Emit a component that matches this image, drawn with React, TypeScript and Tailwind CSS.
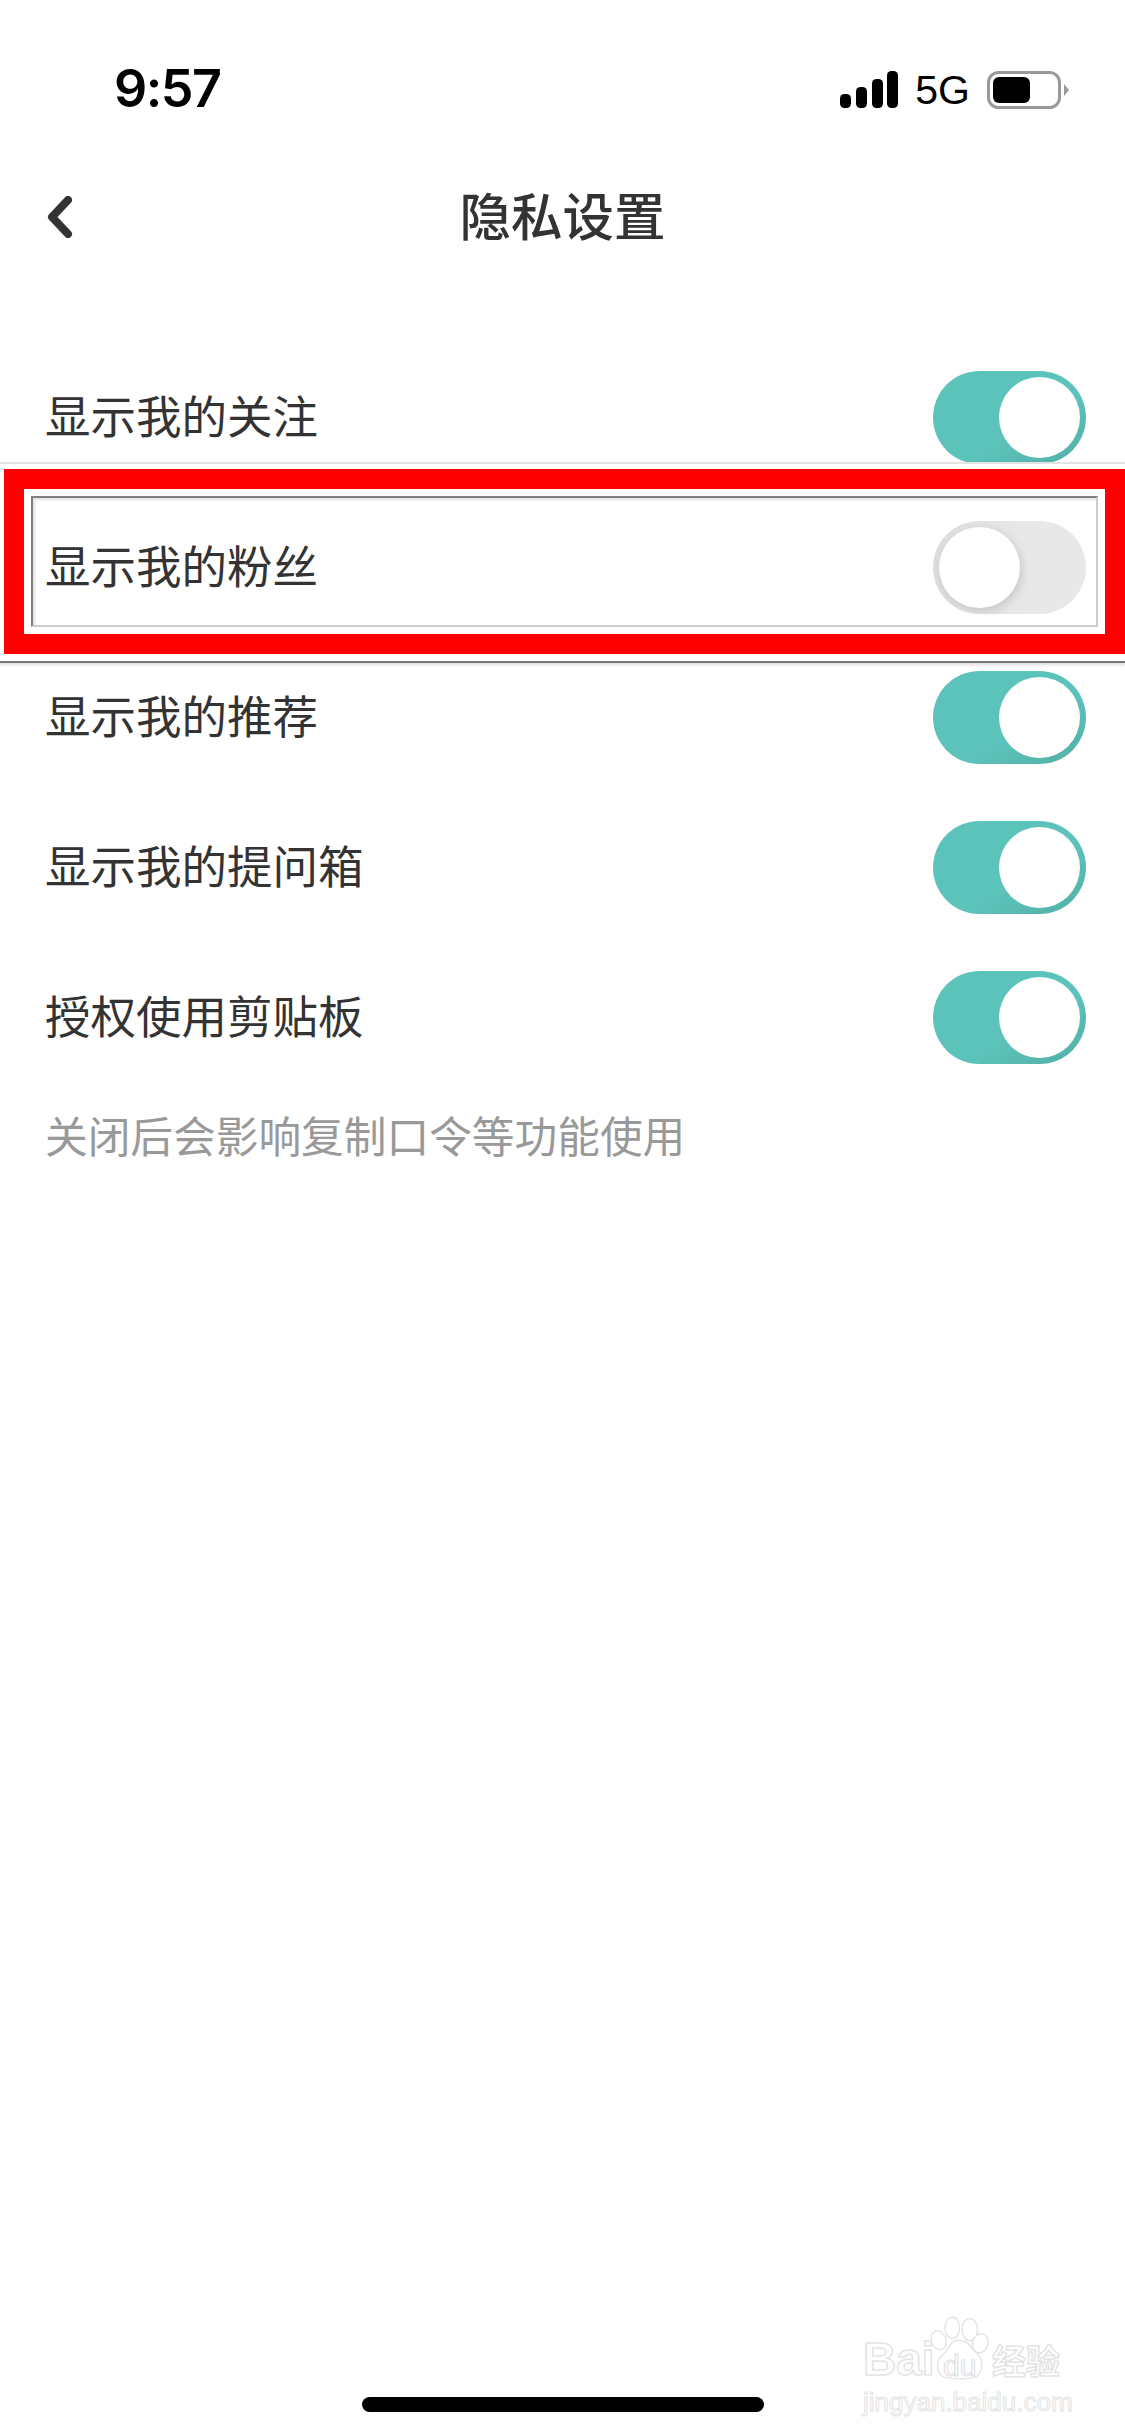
const cjk = "font-['Noto_Sans_CJK_SC','Noto_Sans',sans-serif]"
const outlined = "text-white [-webkit-text-stroke:1.5px_#e4e4e4]"

function Toggle({ on }: { on: boolean }) {
  return (
    <div
      className={`h-[93px] w-[153px] rounded-full p-[6px] flex ${
        on
          ? "justify-end bg-gradient-to-br from-[#5cc3ba] from-60% to-[#52aea6]"
          : "justify-start bg-gradient-to-r from-[#dcdcdc] to-[#e8e8e9] to-60%"
      }`}
    >
      <div className={`h-[81px] w-[81px] rounded-full bg-white ${on ? "" : "shadow-[3px_3px_8px_rgba(0,0,0,0.12)]"}`} />
    </div>
  )
}

function Row({ label, on }: { label: string; on: boolean }) {
  return (
    <div className="flex h-[150px] items-center justify-between pl-[45px] pr-[39px]">
      <span className="mb-[6px] text-[45.5px] leading-[60px] text-[#333333]">{label}</span>
      <Toggle on={on} />
    </div>
  )
}

export default function App() {
  return (
    <div className={`relative h-[2436px] w-[1125px] overflow-hidden bg-white ${cjk}`}>
      {/* status bar */}
      <div className="flex h-[112px] items-end justify-between pl-[114px] pr-[55px] text-black">
        <span className="mb-[-2px] font-['Inter',sans-serif] text-[52px] leading-[50px] font-semibold tracking-[-1.5px]">9:57</span>
        <div className="flex items-center gap-[17px] font-['Liberation_Sans',sans-serif]">
          <svg width="58" height="38" viewBox="0 0 58 38" fill="black">
            <rect x="0" y="23" width="11" height="14" rx="4.5" />
            <rect x="16" y="16" width="11" height="21" rx="4.5" />
            <rect x="32" y="8" width="11" height="29" rx="4.5" />
            <rect x="47" y="0" width="11" height="37" rx="4.5" />
          </svg>
          <span className="text-[41px] leading-[44px]">5G</span>
          <svg width="83" height="38" viewBox="0 0 83 38">
            <rect x="1.5" y="1.5" width="71" height="35" rx="10" fill="none" stroke="#999999" strokeWidth="3" />
            <rect x="6" y="6" width="37" height="26" rx="6" fill="black" />
            <path d="M77 13 L82 19 L77 25 Z" fill="#999999" />
          </svg>
        </div>
      </div>

      {/* nav */}
      <div className="relative mt-[53px] flex h-[100px] items-center justify-center">
        <svg className="absolute left-[47px] top-[31px]" width="26" height="42" viewBox="0 0 26 42" fill="none">
          <path d="M21 4 L5 21 L21 38" stroke="#333333" strokeWidth="8" strokeLinecap="round" strokeLinejoin="round" />
        </svg>
        <h1 className="mb-[2px] text-[51.5px] leading-[64px] font-medium text-[#333333]">隐私设置</h1>
      </div>

      {/* settings list */}
      <div className="relative mt-[77px]">
        <Row label="显示我的关注" on />
        <Row label="显示我的粉丝" on={false} />
        <Row label="显示我的推荐" on />
        <Row label="显示我的提问箱" on />
        <Row label="授权使用剪贴板" on />

        {/* red highlight drawn over row 2 */}
        <div className="pointer-events-none absolute top-[120px] left-0 h-[201px] w-[1125px] border-t-[2px] border-b-[2px] border-t-[#e4e4e4] border-b-[#777777] pt-[5px] shadow-[0_2px_3px_rgba(0,0,0,0.15)]">
          <div className="ml-[4px] h-[185px] w-[1121px] border-[20px] border-[#ff0000] p-[7px]">
            <div className="h-full w-full border-[2px] border-t-[#808080] border-l-[#808080] border-r-[#cccccc] border-b-[#cccccc] shadow-[inset_2px_2px_3px_rgba(0,0,0,0.12)]" />
          </div>
        </div>

        <p className="mt-[12px] pl-[45px] text-[42.7px] leading-[60px] text-[#999999]">关闭后会影响复制口令等功能使用</p>
      </div>

      {/* watermark */}
      <div className="absolute top-[2316px] left-[863px] flex w-[205px] flex-col font-['Liberation_Sans',sans-serif]">
        <div className="flex h-[68px] items-end">
          <span className="w-[67px] shrink-0 pb-[2px] text-[46px] leading-[46px] font-bold whitespace-nowrap text-white [-webkit-text-stroke:1.5px_#e4e4e4]">Bai</span>
          <div className="relative h-[68px] w-[62px] shrink-0">
            <svg className="absolute inset-0" width="62" height="68" viewBox="0 0 64 68" fill="white" stroke="#e4e4e4" strokeWidth="1.5">
              <ellipse cx="9" cy="24" rx="7.5" ry="10" transform="rotate(-20 9 24)" />
              <ellipse cx="23" cy="11" rx="7.5" ry="11" />
              <ellipse cx="41" cy="13" rx="8" ry="11.5" />
              <ellipse cx="52" cy="27" rx="8" ry="10" transform="rotate(20 52 27)" />
              <path d="M30 24 C40 24 42 32 48 37 C56 44 56 62 42 63 C36 64 26 64 20 63 C6 62 4 46 14 38 C20 33 20 24 30 24 Z" />
            </svg>
            <span className="absolute left-[13px] top-[36px] text-[30px] leading-[28px] text-white [-webkit-text-stroke:1px_#dcdcdc]">du</span>
          </div>
          <span className={`${cjk} text-[34px] leading-[48px] font-bold whitespace-nowrap ${outlined}`}>经验</span>
        </div>
        <div className="mt-[4px] text-[26px] leading-[28px] whitespace-nowrap text-white [-webkit-text-stroke:1px_#e4e4e4]">jingyan.baidu.com</div>
      </div>

      {/* home indicator */}
      <div className="absolute top-[2397px] left-[362px] h-[15px] w-[402px] rounded-full bg-black" />
    </div>
  )
}
